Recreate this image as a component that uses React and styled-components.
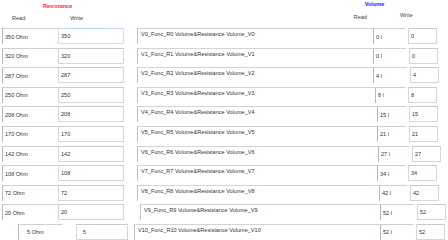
import React from "react";
import styled, { createGlobalStyle } from "styled-components";

const GlobalStyle = createGlobalStyle`
  html, body {
    margin: 0;
    padding: 0;
    background: #ffffff;
  }
  body {
    font-family: "Liberation Sans", Arial, sans-serif;
    font-size: 5.55px;
    color: #333;
  }
`;

const Page = styled.div`
  width: 448px;
  height: 240px;
  overflow: hidden;
  display: flex;
  flex-direction: column;
`;

const Header = styled.div`
  height: 28px;
  display: flex;
`;

const HeadGroup = styled.div`
  width: ${(p) => p.width}px;
  margin-left: ${(p) => p.offset || 0}px;
  display: flex;
  flex-direction: column;
`;

const Title = styled.div`
  color: ${(p) => p.color};
  font-weight: bold;
  padding-left: ${(p) => p.indent}px;
  margin-top: ${(p) => p.top}px;
  line-height: 6px;
`;

const Labels = styled.div`
  display: flex;
  margin-top: ${(p) => p.top}px;
  line-height: 6px;
  color: #444;
`;

const Label = styled.span`
  margin-left: ${(p) => p.indent}px;
  position: relative;
  top: ${(p) => p.lift || 0}px;
`;

const List = styled.div`
  display: flex;
  flex-direction: column;
  gap: 3.6px;
`;

const Row = styled.div`
  display: flex;
  height: 16px;
`;

const Field = styled.div`
  box-sizing: border-box;
  height: 16px;
  width: ${(p) => p.width}px;
  margin-left: ${(p) => p.offset}px;
  display: flex;
  align-items: center;
  padding-left: ${(p) => p.pad ?? 2}px;
  white-space: nowrap;
  overflow: hidden;
  color: #333;
`;

const ReadField = styled(Field)`
  border-top: 1px solid #d0d0d0;
  border-left: 1px solid #b8b8b8;
`;

const WriteField = styled(Field)`
  border: 1px solid ${(p) => (p.focus ? "#cfe0f0" : "#d6d6d6")};
  border-top-color: ${(p) => (p.focus ? "#c4d8ec" : "#cacaca")};
`;

const DescField = styled(Field)`
  border-top: 1px solid #d4d4d4;
  border-left: 1px solid #c4c4c4;
  align-items: flex-start;
  padding-top: 2px;
  padding-left: 3px;
`;

const rows = [
  { r: "350 Ohm", w: "350", vr: "0 l", vw: "0", rx: 373, wx: 408, focus: true },
  { r: "320 Ohm", w: "320", vr: "0 l", vw: "0", rx: 373, wx: 409 },
  { r: "287 Ohm", w: "287", vr: "4 l", vw: "4", rx: 373, wx: 410 },
  { r: "250 Ohm", w: "250", vr: "8 l", vw: "8", rx: 375, wx: 408 },
  { r: "208 Ohm", w: "208", vr: "15 l", vw: "15", rx: 377, wx: 409 },
  { r: "170 Ohm", w: "170", vr: "21 l", vw: "21", rx: 377, wx: 409 },
  { r: "142 Ohm", w: "142", vr: "27 l", vw: "27", rx: 378, wx: 412 },
  { r: "108 Ohm", w: "108", vr: "34 l", vw: "34", rx: 377, wx: 408 },
  { r: "72 Ohm", w: "72", vr: "42 l", vw: "42", rx: 379, wx: 410 },
  { r: "20 Ohm", w: "20", vr: "52 l", vw: "52", vx: 140, rx: 380, wx: 417 },
  { r: "5 Ohm", w: "5", vr: "52 l", vw: "52", lx: 18, rEnd: 63, wl: 76, wr: 128, vx: 134, rx: 380, wx: 416 },
];

const VolumeRow = ({ row, index }) => {
  const lx = row.lx ?? 2;
  const wl = row.wl ?? 58;
  const rEnd = row.rEnd ?? wl;
  const wr = row.wr ?? 124;
  const vx = row.vx ?? 137;
  const wx = row.wx;
  return (
    <Row>
      <ReadField offset={lx} width={rEnd - lx} pad={lx > 2 ? 8 : 2}>
        {row.r}
      </ReadField>
      <WriteField offset={wl - rEnd} width={wr - wl} focus={row.focus} pad={lx > 2 ? 6 : 2}>
        {row.w}
      </WriteField>
      <DescField offset={vx - wr} width={row.rx - vx}>
        V{index}_Func_R{index} Volume&amp;Resistance Volume_V{index}
      </DescField>
      <ReadField offset={0} width={wx - 3 - row.rx}>
        {row.vr}
      </ReadField>
      <WriteField offset={3} width={29}>
        {row.vw}
      </WriteField>
    </Row>
  );
};

export default function App() {
  return (
    <Page>
      <GlobalStyle />
      <Header>
        <HeadGroup width={124}>
          <Title color="#ff2a3a" indent={43} top={3}>
            Resistance
          </Title>
          <Labels top={6}>
            <Label indent={12}>Read</Label>
            <Label indent={45}>Write</Label>
          </Labels>
        </HeadGroup>
        <HeadGroup width={100} offset={230}>
          <Title color="#2020ff" indent={14} top={1}>
            Volume
          </Title>
          <Labels top={7}>
            <Label indent={3}>Read</Label>
            <Label indent={33} lift={-2}>
              Write
            </Label>
          </Labels>
        </HeadGroup>
      </Header>
      <List>
        {rows.map((row, i) => (
          <VolumeRow key={i} row={row} index={i} />
        ))}
      </List>
    </Page>
  );
}
